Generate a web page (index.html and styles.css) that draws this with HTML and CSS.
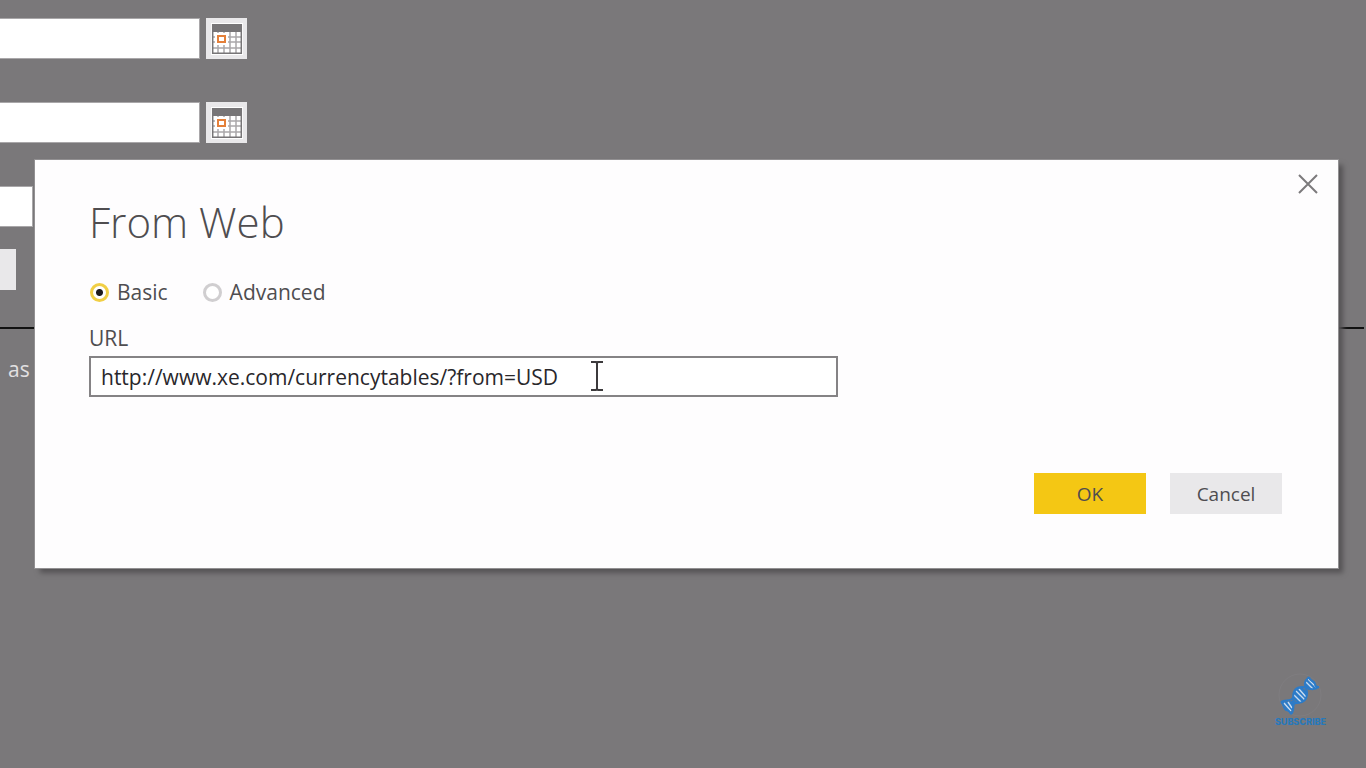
FILE: index.html
```html
<!DOCTYPE html>
<html lang="en">
<head>
<meta charset="utf-8">
<meta name="viewport" content="width=device-width, initial-scale=1">
<title>From Web</title>
<link rel="stylesheet" href="styles.css">
</head>
<body>
<svg class="sprite" aria-hidden="true">
  <symbol id="calendar" viewBox="0 0 32 32">
    <path fill="#fff" d="M0 0h32v32H0z"/>
    <path fill="none" stroke="#aaa8aa" stroke-width="1.5" d="M7 9v21M13 9v21M19 9v21M25 9v21M2 14h28M2 19h28M2 25h28"/>
    <path fill="none" stroke="#777577" stroke-width="1.5" d="M1.700 1.700h28.600v28.600H1.700z"/>
    <path fill="#777577" d="M1 1h30v8H1z"/>
    <path fill="#fff" d="M4 10h13v12H4z"/>
    <path fill="#fff" stroke="#e4803a" stroke-width="2" d="M7 13h7v6H7z"/>
  </symbol>
</svg>

<main class="backdrop">
  <div class="row">
    <input class="field" type="text" aria-label="Start date">
    <button class="picker" type="button" aria-label="Pick start date"><svg class="calendar"><use href="#calendar"/></svg></button>
  </div>
  <div class="row">
    <input class="field" type="text" aria-label="End date">
    <button class="picker" type="button" aria-label="Pick end date"><svg class="calendar"><use href="#calendar"/></svg></button>
  </div>
  <div class="row row-last">
    <input class="field field-short" type="text" aria-label="Value">
  </div>
  <button class="stub" type="button" aria-label="Submit"></button>
  <hr class="rule">
  <p class="note">as</p>
</main>

<section class="dialog" role="dialog" aria-labelledby="title">
  <button class="close" type="button" aria-label="Close">
    <svg class="cross" viewBox="0 0 20 20"><path d="M1 1l18 18M19 1L1 19" fill="none" stroke="#7c7a7c" stroke-width="2"/></svg>
  </button>
  <h1 class="title" id="title">From Web</h1>
  <form class="form">
    <div class="modes">
      <label class="mode"><input class="radio" type="radio" name="mode" checked>Basic</label>
      <label class="mode"><input class="radio" type="radio" name="mode">Advanced</label>
    </div>
    <label class="label" for="url">URL</label>
    <div class="urlbox">
      <input class="url" id="url" type="text" value="http://www.xe.com/currencytables/?from=USD">
      <svg class="caret" viewBox="0 0 14 30" aria-hidden="true"><path d="M1 1h5l1 1 1-1h5M7 2v26M1 29h5l1-1 1 1h5" fill="none" stroke="#3c3a3c" stroke-width="2"/></svg>
    </div>
    <div class="actions">
      <button class="btn primary" type="button">OK</button>
      <button class="btn" type="button">Cancel</button>
    </div>
  </form>
</section>

<a class="subscribe" href="#subscribe">
  <svg class="dna" viewBox="0 0 48 44" aria-hidden="true">
    <circle cx="24" cy="22" r="21" fill="none" stroke="#7f7d80" stroke-width="1"/>
    <ellipse cx="24" cy="22" rx="7" ry="7.500" fill="#2c7bc8"/>
    <path d="M32 5C27 10 28 14 33 17L42 14C38 13 40 9 36 8ZM6 29C10 32 8 36 14 40C17 36 19 31 17 28Z" fill="#2c7bc8"/>
    <path d="M30 9l7 7M32 6l8 8M20 18l9 9M23 16l7 8M18 22l7 7M8 30l7 8M12 29l4 6" fill="none" stroke="#c9dcf0" stroke-width="1.400"/>
    <path d="M5 29C9 26 14 29 17 25C17 17 20 14 26 14C32 14 35 19 43 14M33 4C25 11 31 14 31 20C31 27 27 30 22 30C14 29 20 36 15 41M33 4C34 9 38 7 39 11Q39 14 43 14M5 29C8 31 7 35 10 37Q13 37 15 41M17 25C17 29 19 30 22 30" fill="none" stroke="#2c7bc8" stroke-width="2" stroke-linejoin="round"/>
  </svg>
  <span class="subscribe-text">SUBSCRIBE</span>
</a>
</body>
</html>
```
FILE: styles.css
```css
* {
  box-sizing: border-box;
}

body {
  margin: 0;
  min-height: 100vh;
  background: #7a787a;
  color: #4f4d50;
  font: 21px/30px "Open Sans", "Noto Sans", sans-serif;
  overflow: hidden;
}

button,
input {
  margin: 0;
  padding: 0;
  border: 0;
  border-radius: 0;
  font: inherit;
  color: inherit;
}

.sprite {
  display: none;
}

.backdrop {
  padding-top: 18px;
}

.row {
  display: flex;
  gap: 6px;
  margin-bottom: 43px;
}

.row-last {
  margin-bottom: 22px;
}

.field {
  width: 200px;
  height: 41px;
  background: #fff;
  border: solid #a9a7a9;
  border-width: 1px 1px 1px 0;
}

.field-short {
  width: 33px;
}

.picker {
  display: grid;
  place-items: center;
  width: 41px;
  height: 41px;
  background: #e9e8ea;
}

.calendar {
  width: 32px;
  height: 32px;
}

.stub {
  display: block;
  width: 16px;
  height: 41px;
  background: #e9e8ea;
}

.rule {
  margin: 37px 2px 25px 0;
  border: 0;
  border-top: 2px solid #111;
}

.note {
  margin: 0;
  padding-left: 8px;
  color: #e2e0e2;
}

.dialog {
  position: absolute;
  top: 160px;
  left: 35px;
  right: 28px;
  padding: 35px 56px 54px 54px;
  background: #fefdfe;
  box-shadow: 0 0 0 1px #929092, 5px 5px 5px 0 #555355;
}

.close {
  position: absolute;
  top: 14px;
  right: 20px;
  display: grid;
  width: 20px;
  height: 20px;
  background: none;
}

.cross {
  width: 20px;
  height: 20px;
}

.title {
  margin: 0 0 28px;
  font-size: 42px;
  line-height: 54px;
  font-weight: 300;
}

.modes {
  display: flex;
  gap: 35px;
  padding-left: 1px;
  margin-bottom: 16px;
}

.mode {
  display: flex;
  align-items: center;
  gap: 8px;
}

.radio {
  appearance: none;
  width: 19px;
  height: 19px;
  border: 3px solid #d0ced0;
  border-radius: 50%;
  background: #fff;
}

.radio:checked {
  border-color: #f1cf45;
  background: radial-gradient(circle, #1d1b1d 3px, #fff 4px);
}

.label {
  display: block;
  margin-bottom: 3px;
}

.urlbox {
  position: relative;
  max-width: 749px;
}

.url {
  display: block;
  width: 100%;
  height: 41px;
  padding: 0 10px;
  border: 2px solid #858385;
  background: #fff;
  color: #29272b;
}

.caret {
  position: absolute;
  top: 5px;
  left: 501px;
  width: 14px;
  height: 30px;
}

.actions {
  display: flex;
  justify-content: flex-end;
  gap: 24px;
  margin-top: 76px;
}

.btn {
  width: 112px;
  height: 41px;
  background: #e9e8ea;
  font-size: 19px;
}

.primary {
  background: #f4c714;
}

.subscribe {
  position: absolute;
  right: 40px;
  bottom: 41px;
  display: flex;
  flex-direction: column;
  align-items: center;
  color: #2878bb;
  text-decoration: none;
}

.dna {
  width: 48px;
  height: 44px;
}

.subscribe-text {
  font: 800 9px/10px "Inter", sans-serif;
}
```
